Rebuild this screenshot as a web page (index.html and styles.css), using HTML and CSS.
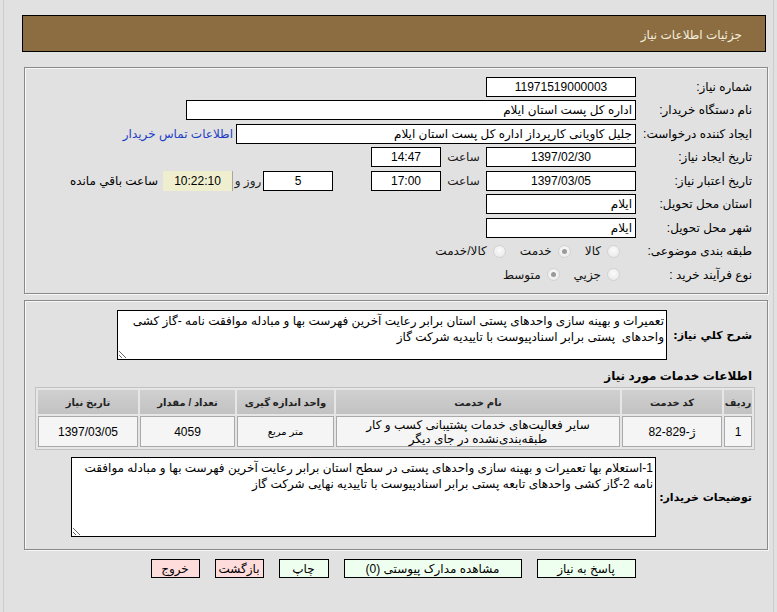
FILE: index.html
```html
<!DOCTYPE html>
<html lang="fa" dir="rtl">
<head>
<meta charset="utf-8">
<title>جزئیات اطلاعات نیاز</title>
<link rel="stylesheet" href="styles.css">
</head>
<body>
<div class="frame">
  <div class="titlebar"><span class="title">جزئیات اطلاعات نیاز</span></div>

  <div class="panel info">
    <div class="row">
      <div class="lbl">شماره نیاز:</div>
      <div class="field w150 center">11971519000003</div>
    </div>
    <div class="row">
      <div class="lbl">نام دستگاه خریدار:</div>
      <div class="field w450">اداره کل پست استان ایلام</div>
    </div>
    <div class="row">
      <div class="lbl">ایجاد کننده درخواست:</div>
      <div class="field w400">جلیل کاویانی کارپرداز اداره کل پست استان ایلام</div>
      <a class="contact" href="#">اطلاعات تماس خریدار</a>
    </div>
    <div class="row">
      <div class="lbl">تاریخ ایجاد نیاز:</div>
      <div class="field w150 center">1397/02/30</div>
      <div class="unit">ساعت</div>
      <div class="field w70 center">14:47</div>
    </div>
    <div class="row">
      <div class="lbl">تاریخ اعتبار نیاز:</div>
      <div class="field w150 center">1397/03/05</div>
      <div class="unit">ساعت</div>
      <div class="field w70 center">17:00</div>
      <div class="field w70 center days">5</div>
      <div class="unit small">روز و</div>
      <div class="remain">10:22:10</div>
      <div class="remain-lbl">ساعت باقي مانده</div>
    </div>
    <div class="row">
      <div class="lbl">استان محل تحویل:</div>
      <div class="field w150">ایلام</div>
    </div>
    <div class="row">
      <div class="lbl">شهر محل تحویل:</div>
      <div class="field w150">ایلام</div>
    </div>
    <div class="row">
      <div class="lbl">طبقه بندی موضوعی:</div>
      <div class="options">
        <span class="opt"><span class="radio"></span>کالا</span>
        <span class="opt"><span class="radio on"></span>خدمت</span>
        <span class="opt"><span class="radio"></span>کالا/خدمت</span>
      </div>
    </div>
    <div class="row">
      <div class="lbl">نوع فرآیند خرید :</div>
      <div class="options">
        <span class="opt"><span class="radio"></span>جزیي</span>
        <span class="opt"><span class="radio on"></span>متوسط</span>
      </div>
    </div>
  </div>

  <div class="panel details">
    <div class="drow first">
      <div class="dlbl w85">شرح کلي نیاز:</div>
      <textarea class="box desc" readonly>تعمیرات و بهینه سازی واحدهای پستی استان برابر رعایت آخرین فهرست بها و مبادله موافقت نامه -گاز کشی واحدهای  پستی برابر اسنادپیوست با تاییدیه شرکت گاز</textarea>
    </div>

    <div class="section">اطلاعات خدمات مورد نیاز</div>

    <table class="grid">
      <thead>
        <tr>
          <th class="c1">ردیف</th>
          <th class="c2">کد خدمت</th>
          <th class="c3">نام خدمت</th>
          <th class="c4">واحد اندازه گیری</th>
          <th class="c5">تعداد / مقدار</th>
          <th class="c6">تاریخ نیاز</th>
        </tr>
      </thead>
      <tbody>
        <tr>
          <td>1</td>
          <td>ژ-829-82</td>
          <td class="name">سایر فعالیت‌های خدمات پشتیبانی کسب و کار<br>طبقه‌بندی‌نشده در جای دیگر</td>
          <td class="smallcell">متر مربع</td>
          <td>4059</td>
          <td>1397/03/05</td>
        </tr>
      </tbody>
    </table>

    <div class="drow second">
      <div class="dlbl w96">توضیحات خریدار:</div>
      <textarea class="box notes" readonly>1-استعلام بها تعمیرات و بهینه سازی واحدهای پستی در سطح استان برابر رعایت آخرین فهرست بها و مبادله موافقت نامه 2-گاز کشی واحدهای تابعه پستی برابر اسنادپیوست با تاییدیه نهایی شرکت گاز</textarea>
    </div>
  </div>

  <div class="buttons">
    <button class="btn green b1">پاسخ به نیاز</button>
    <button class="btn green b2">مشاهده مدارک پیوستی (0)</button>
    <button class="btn green b3">چاپ</button>
    <button class="btn pink b4">بازگشت</button>
    <button class="btn pink b5">خروج</button>
  </div>
</div>
</body>
</html>
```

FILE: styles.css
```css
* { box-sizing: border-box; }
html, body { margin: 0; padding: 0; }
body {
  background: #e1e1e1;
  font-family: "Liberation Sans", "DejaVu Sans", sans-serif;
  font-size: 12px;
  color: #000;
  width: 777px;
  height: 612px;
  overflow: hidden;
}
.frame {
  margin: 0 3px;
  height: 612px;
  border-left: 1px solid #cdcdcd;
  border-right: 1px solid #cdcdcd;
  padding: 15px 5px 0 18px;
}
.titlebar {
  margin-right: 2px;
  height: 37px;
  background: #8c6d42;
  border: 1px solid #000;
  display: flex;
  align-items: center;
  padding: 3px 23px 0 0;
}
.title { color: #f4efdc; font-size: 12px; }

.panel {
  margin-left: 2px;
  border: 1px solid #8a8a8a;
  box-shadow: inset 1px 1px 0 #f6f6f6, 1px 1px 0 #f6f6f6;
}
.info {
  margin-top: 15px;
  height: 227px;
  padding: 7px 15px 0 0;
}
.row {
  display: flex;
  align-items: center;
  height: 23.5px;
}
.lbl { width: 116px; flex: none; white-space: nowrap; }
.field {
  flex: none;
  height: 20px;
  line-height: 18px;
  border: 1px solid #000;
  background: #fff;
  padding: 0 3px;
  white-space: nowrap;
  overflow: hidden;
}
.center { text-align: center; }
.w150 { width: 150px; }
.w450 { width: 450px; }
.w400 { width: 400px; }
.w70 { width: 70px; }
.days { margin-right: 38px; }
.contact { color: #1d3fc4; text-decoration: none; margin-right: 3px; white-space: nowrap; }
.unit { width: 45px; text-align: center; color: #222; flex: none; }
.unit.small { width: 30px; }
.remain {
  width: 70px;
  height: 20px;
  line-height: 20px;
  text-align: center;
  background: #efefcf;
  border-right: 1px solid #a8a8a0;
  flex: none;
}
.remain-lbl { margin-right: 5px; white-space: nowrap; }
.options { display: flex; align-items: center; gap: 14px; padding-right: 16px; }
.opt { display: inline-flex; align-items: center; gap: 6px; color: #111; }
.radio {
  width: 13px; height: 13px;
  border-radius: 50%;
  border: 1px solid #d2d2d2;
  background: radial-gradient(circle at 50% 40%, #fbfbfb, #e6e6e6);
  position: relative;
  flex: none;
}
.radio.on::after {
  content: "";
  position: absolute;
  left: 3px; top: 3px;
  width: 5px; height: 5px;
  border-radius: 50%;
  background: #9a9a9a;
}

.details {
  margin-top: 6px;
  height: 250px;
  padding: 0 12px 0 10px;
}
.drow { display: flex; align-items: center; }
.drow.first { margin-top: 9px; }
.drow.second { margin-top: 7px; }
.dlbl {
  font-family: "DejaVu Sans", sans-serif;
  font-weight: bold;
  font-size: 11px;
  padding-right: 3px;
  flex: none;
  white-space: nowrap;
}
.w85 { width: 88px; }
.w96 { width: 99px; }
.box {
  font-family: "Liberation Sans", "DejaVu Sans", sans-serif;
  font-size: 12px;
  line-height: 16px;
  border: 1px solid #000;
  background: #fff;
  padding: 2px 2px;
  margin: 0;
  resize: both;
  flex: none;
  color: #000;
}
.desc { width: 550px; height: 50px; }
.notes { width: 585px; height: 80px; }
.section {
  font-weight: bold;
  padding-right: 3px;
  margin-top: 7px;
  height: 18px;
  line-height: 18px;
}
.grid {
  width: 720px;
  border: 1px solid #c2c2c2;
  border-spacing: 2px;
  margin-top: 2px;
  background: #e6e6e6;
}
.grid th {
  height: 24px;
  background: linear-gradient(#d0d0d0, #c2c2c2);
  font-weight: bold;
  font-size: 10px;
  color: #222;
  padding: 0;
}
.grid td {
  height: 31px;
  background: #f5f5f5;
  border: 1px solid #a9a9a9;
  text-align: center;
  padding: 0;
  line-height: 14px;
}
.c1 { width: 28px; }
.c2 { width: 100px; }
.c3 { width: 284px; }
.c4 { width: 97px; }
.c5 { width: 95px; }
.c6 { width: 100px; }
.grid td.smallcell { font-size: 10px; }

.buttons {
  display: flex;
  justify-content: center;
  gap: 15px;
  margin-top: 9px;
  padding-right: 4px;
}
.btn {
  font-family: "Liberation Sans", "DejaVu Sans", sans-serif;
  font-size: 12px;
  height: 19px;
  border: 1px solid #000;
  padding: 0;
  color: #000;
  white-space: nowrap;
  overflow: visible;
}
.green { background: #efffef; }
.pink { background: #ffdcdc; }
.b1 { width: 99px; }
.b2 { width: 178px; }
.b3 { width: 50px; }
.b4 { width: 49px; }
.b5 { width: 49px; }
```
